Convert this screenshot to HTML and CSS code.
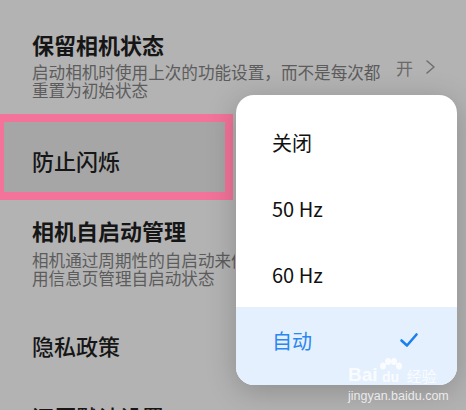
FILE: index.html
```html
<!DOCTYPE html>
<html lang="zh-CN">
<head>
  <meta charset="UTF-8">
  <meta name="viewport" content="width=device-width, initial-scale=1.0">
  <title>相机设置</title>
  <link rel="stylesheet" href="styles.css">
</head>
<body>
  <div class="screen">
    <div class="settings">
      <div class="item item-keep">
        <div class="item-text">
          <div class="title title-bold">保留相机状态</div>
          <div class="desc">
            <div>启动相机时使用上次的功能设置，而不是每次都</div>
            <div>重置为初始状态</div>
          </div>
        </div>
        <div class="value">
          <span>开</span>
          <svg class="chevron" width="12" height="16" viewBox="0 0 12 16">
            <path d="M2 2 L9 8 L2 14" fill="none" stroke="#707070" stroke-width="1.6" stroke-linecap="round" stroke-linejoin="round"/>
          </svg>
        </div>
      </div>

      <div class="item item-flicker">
        <div class="title">防止闪烁</div>
      </div>

      <div class="item item-autostart">
        <div class="title title-bold">相机自启动管理</div>
        <div class="desc desc-clipped">
          <div>相机通过周期性的自启动来优化使用体验，可在应</div>
          <div>用信息页管理自启动状态</div>
        </div>
      </div>

      <div class="item item-privacy">
        <div class="title">隐私政策</div>
      </div>

      <div class="item item-reset">
        <div class="title">还原默认设置</div>
      </div>
    </div>

    <!-- menu déroulant par-dessus la liste -->
    <div class="menu">
      <div class="menu-row">关闭</div>
      <div class="menu-row">50 Hz</div>
      <div class="menu-row">60 Hz</div>
      <div class="menu-row menu-row-active">
        <span>自动</span>
        <svg width="20" height="16" viewBox="0 0 20 16">
          <path d="M2.5 8.5 L8 13.5 L17.5 2.5" fill="none" stroke="#1b7ef0" stroke-width="2.6" stroke-linecap="round" stroke-linejoin="round"/>
        </svg>
      </div>
    </div>

    <div class="watermark">
      <div class="wm-logo">
        <span class="wm-bai">Bai</span>
        <span class="wm-du">
          <svg width="24" height="13" viewBox="0 0 24 13">
            <g fill="rgba(255,255,255,0.8)">
              <ellipse cx="4" cy="8" rx="3" ry="3.5"/>
              <ellipse cx="9" cy="3.5" rx="3" ry="3.5"/>
              <ellipse cx="15" cy="3.5" rx="3" ry="3.5"/>
              <ellipse cx="20" cy="8" rx="3" ry="3.5"/>
            </g>
          </svg>
          <span>du</span>
        </span>
        <span class="wm-cn">经验</span>
      </div>
      <div class="wm-url">jingyan.baidu.com</div>
    </div>
  </div>
</body>
</html>
```

FILE: styles.css
```css
body {
  margin: 0;
  font-family: "Noto Sans CJK SC", "Noto Sans", sans-serif;
  background-color: #b3b3b3;
}

.screen {
  position: relative;
  width: 466px;
  height: 410px;
  overflow: hidden;
  background: #b3b3b3;
}

.settings {
  display: flex;
  flex-direction: column;
}

.item {
  padding-left: 32px;
  box-sizing: border-box;
  flex-shrink: 0;
}

.title {
  font-size: 22px;
  line-height: 28px;
  color: #161616;
  font-weight: 500;
}

.title-bold {
  font-weight: 700;
}

.desc {
  font-size: 16.6px;
  line-height: 18px;
  color: #5c5c5c;
  white-space: nowrap;
}

.desc div {
  height: 18px;
}

.item-keep {
  height: 114px;
  padding-top: 30px;
  display: flex;
  justify-content: space-between;
}

.item-keep .desc {
  margin-top: 5px;
}

.value {
  display: flex;
  align-items: center;
  gap: 12px;
  height: 28px;
  margin-top: 23px;
  margin-right: 29px;
  font-size: 17px;
  color: #6a6a6a;
}

.item-flicker {
  height: 86px;
  width: 237px;
  margin-left: -4px;
  padding-left: 28px;
  padding-top: 24px;
  border: 8px solid #f3739a;
  background: #a6a6a6;
}

.item-autostart {
  padding-top: 16px;
  height: 131px;
}

.item-autostart .desc {
  margin-top: 7px;
}

/* le texte passe sous le menu */
.desc-clipped {
  width: 203px;
  overflow: hidden;
}

.item-privacy {
  height: 71px;
}

.menu {
  position: absolute;
  left: 236px;
  top: 95px;
  width: 221px;
  height: 290px;
  box-sizing: border-box;
  padding-top: 14px;
  background: #ffffff;
  border-radius: 18px;
  overflow: hidden;
  box-shadow: 0 6px 30px rgba(0, 0, 0, 0.22);
  display: flex;
  flex-direction: column;
}

.menu-row {
  height: 66px;
  flex-shrink: 0;
  display: flex;
  align-items: center;
  justify-content: space-between;
  padding: 0 38px 0 36px;
  font-size: 20px;
  color: #111111;
}

.menu-row-active {
  flex: 1;
  height: auto;
  padding-bottom: 12px;
  background: #e4f0fd;
  color: #2a86f0;
}

.watermark {
  position: absolute;
  left: 348px;
  top: 358px;
  color: rgba(255, 255, 255, 0.8);
  display: flex;
  flex-direction: column;
}

.wm-logo {
  display: flex;
  align-items: flex-end;
  gap: 1px;
  height: 26px;
  font-family: "Liberation Sans", sans-serif;
  font-weight: 700;
  white-space: nowrap;
}

.wm-bai {
  font-size: 19px;
  line-height: 19px;
}

.wm-du {
  display: flex;
  flex-direction: column;
  align-items: center;
  font-size: 14px;
  line-height: 13px;
}

.wm-cn {
  font-family: "Noto Sans CJK SC", sans-serif;
  font-weight: 400;
  font-size: 15px;
  line-height: 17px;
  margin-left: 3px;
}

.wm-url {
  font-family: "Liberation Sans", sans-serif;
  font-size: 12.5px;
  line-height: 16px;
  margin-top: 4px;
  color: rgba(240, 240, 240, 0.95);
}
```
